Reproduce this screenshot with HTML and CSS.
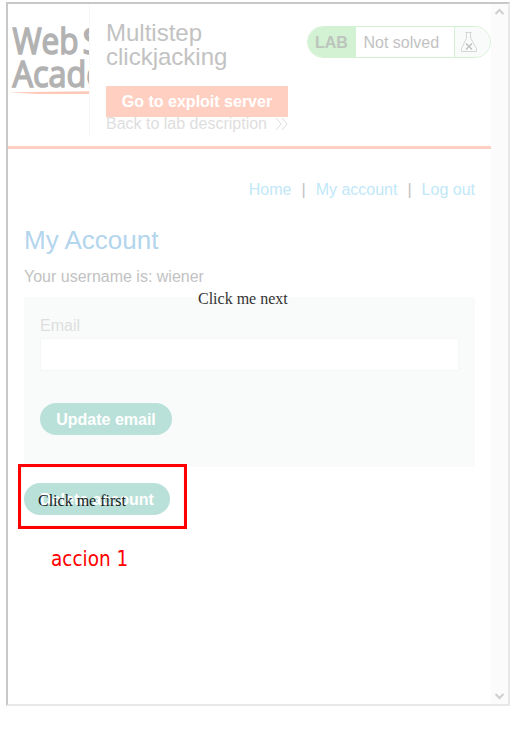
FILE: index.html
```html
<!DOCTYPE html>
<html lang="en">
<head>
<meta charset="utf-8">
<title>Multistep clickjacking</title>
<link rel="stylesheet" href="styles.css">
</head>
<body>
<div class="frame">
  <main class="page">
    <header class="header">
      <svg class="logo" width="81" height="132" viewBox="0 0 81 132">
        <g class="logo-text">
          <text x="4.500" y="50" textLength="66" lengthAdjust="spacingAndGlyphs">Web</text>
          <text x="74.500" y="50">S</text>
          <text x="4.500" y="83" textLength="92" lengthAdjust="spacingAndGlyphs">Acade</text>
        </g>
        <path d="M0 88.2 L81 87.2 V90 H30 Z" fill="#ffc9ba"/>
      </svg>
      <div class="lab-info">
        <h2>Multistep<br>clickjacking</h2>
        <a class="exploit">Go to exploit server</a>
        <a class="back">Back to lab description
          <svg width="13" height="14" viewBox="0 0 13 14"><path d="M1 1l5 6-5 6M7 1l5 6-5 6" fill="none" stroke="#dcdcdc"/></svg>
        </a>
      </div>
      <div class="status">
        <b>LAB</b><span>Not solved</span>
        <i><svg width="18" height="22" viewBox="0 0 18 22"><path d="M5.5 .5h6M6.5 1v5L1.5 16.5v3h15v-3L10.500 6V1" fill="none" stroke="#d5d5d5"/><path d="M6 11.500l6 6M12 11.500l-6 6" stroke="#bdbdbd" stroke-width="1.3"/></svg></i>
      </div>
    </header>
    <nav class="nav"><a>Home</a><span>|</span><a>My account</a><span>|</span><a>Log out</a></nav>
    <section class="account">
      <h1>My Account</h1>
      <p>Your username is: wiener</p>
      <form class="panel">
        <label for="email">Email</label>
        <input id="email" type="text">
        <button class="pill update" type="button">Update email</button>
      </form>
      <button class="pill delete" type="button">Delete account</button>
    </section>
  </main>
  <div class="scrollbar">
    <svg width="11" height="8" viewBox="0 0 11 8"><path d="M1.5 6l4-4 4 4" /></svg>
    <svg width="11" height="8" viewBox="0 0 11 8"><path d="M1.5 2l4 4 4-4" /></svg>
  </div>
</div>
<div class="decoy next">Click me next</div>
<div class="decoy first">Click me first</div>
<div class="marker"></div>
<div class="note">accion 1</div>
</body>
</html>
```
FILE: styles.css
```css
* { box-sizing: border-box; }
body {
  margin: 0;
  padding: 2px 0 0 6px;
  height: 735px;
  overflow: hidden;
  background: #fff;
  font: 16px/18px "Liberation Sans", Arial, sans-serif;
  color: #c2c2c2;
}
h1, h2, p { margin: 0; font-weight: 400; }
.frame {
  display: flex;
  width: 504px;
  height: 704px;
  border: 2px solid;
  border-color: #c8c8c8 #e8e8e8 #e8e8e8 #c8c8c8;
}
.page { width: 483px; }
.header {
  display: flex;
  height: 145px;
  border-bottom: 3px solid #ffd0c2;
}
.logo {
  flex: none;
  width: 82px;
  overflow: hidden;
  border-right: 1px solid #f7f7f7;
}
.logo-text {
  font: 400 36.5px "Open Sans", "Noto Sans", sans-serif;
  fill: #b2b2b2;
  stroke: #b2b2b2;
  stroke-width: 1.6px;
}
.lab-info { width: 185px; padding: 17px 0 0 16px; flex: none; }
.lab-info h2 { font-size: 24px; line-height: 24px; }
.exploit {
  display: block;
  position: relative;
  width: 182px;
  height: 31px;
  margin-top: 17px;
  background: #ffd0c2;
  color: #fff;
  font-weight: 700;
  line-height: 31px;
  text-align: center;
}
.back {
  display: flex;
  justify-content: space-between;
  align-items: center;
  width: 182px;
  margin-top: -2px;
  color: #dedede;
  white-space: nowrap;
}
.status {
  display: flex;
  width: 184px;
  height: 32px;
  margin: 22px 0 0 auto;
  border: 1px solid #d3f1d3;
  border-radius: 16px;
  overflow: hidden;
  line-height: 32px;
}
.status b { width: 48px; padding-left: 7px; background: #d3f1d3; color: #bcc4bc; }
.status span { width: 98px; padding-left: 7.5px; white-space: nowrap; }
.status i { flex: 1; padding: 5px 0 0 5px; border-left: 1px solid #d3f1d3; background: #f9fbfa; }
.status svg { display: block; }
.nav {
  display: flex;
  justify-content: flex-end;
  gap: 10px;
  padding: 32px 16px 0 0;
}
.nav a { color: #c1e8f8; }
.account { padding: 26px 16px 0; }
h1 { color: #b3d5ed; font-size: 26px; line-height: 30px; }
p { margin-top: 13px; }
.panel {
  height: 170px;
  margin-top: 11px;
  padding: 20px 16px;
  background: #f9fbfa;
}
.panel label { display: block; color: #dedede; }
.panel input {
  display: block;
  width: 419px;
  height: 33px;
  margin: 3px 0 32px;
  border: 1px solid #f5f6f6;
  background: #fff;
}
.pill {
  display: block;
  height: 32px;
  padding: 1px 0 0;
  border: 0;
  border-radius: 16px;
  background: #bae1d9;
  color: #fff;
  font: 700 16px/31px "Liberation Sans", Arial, sans-serif;
}
.update { width: 132px; }
.delete { width: 146px; margin-top: 16px; }
.scrollbar {
  display: flex;
  flex-direction: column;
  justify-content: space-between;
  align-items: center;
  width: 17px;
  padding: 4px 0;
  background: #fbfbfb;
}
.scrollbar path { fill: none; stroke: #cfcfcf; stroke-width: 2; }
.decoy {
  position: absolute;
  color: #333;
  font: 16px/18px "Liberation Serif", "Times New Roman", serif;
  white-space: nowrap;
}
.next { left: 198px; top: 290px; }
.first { left: 38px; top: 492px; color: #17211f; }
.marker {
  position: absolute;
  left: 18px;
  top: 464px;
  width: 169px;
  height: 65px;
  border: 3px solid #f00;
  box-shadow: inset 0 0 1px #f88;
}
.note {
  position: absolute;
  left: 51px;
  top: 547px;
  color: #f00;
  font: 20.5px/24px "DejaVu Sans Condensed", "DejaVu Sans", sans-serif;
}
```
